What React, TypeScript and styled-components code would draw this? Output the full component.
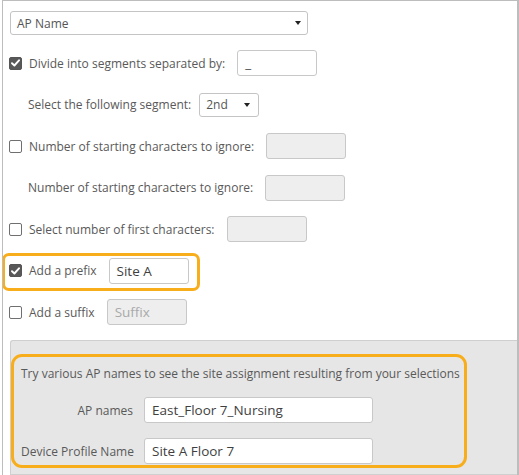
import React from "react";
import styled, { createGlobalStyle } from "styled-components";

const GlobalStyle = createGlobalStyle`
  html, body {
    margin: 0;
    padding: 0;
    background: #ffffff;
  }
  body {
    font-family: "Open Sans", "Noto Sans", "Liberation Sans", sans-serif;
    color: #595959;
  }
`;

const ORANGE = "#f8ad1a";

const Frame = styled.div`
  position: relative;
  box-sizing: border-box;
  width: 517px;
  height: 475px;
  margin-left: 2px;
  padding: 10px 0 0 7px;
  border: 1px solid #bdbdbd;
  border-right-width: 2px;
  border-bottom: none;
  overflow: hidden;
`;

const SelectBox = styled.div<{ $width: number; $caretGap: number }>`
  box-sizing: border-box;
  display: flex;
  align-items: center;
  justify-content: space-between;
  width: ${({ $width }) => $width}px;
  height: 24px;
  padding: 0 ${({ $caretGap }) => $caretGap}px 0 6px;
  border: 1px solid #c4c4c4;
  border-radius: 3px;
  background: #ffffff;
  font-size: 12px;
  color: #555555;
`;

const Caret = styled.span`
  width: 0;
  height: 0;
  border-left: 3.5px solid transparent;
  border-right: 3.5px solid transparent;
  border-top: 4.5px solid #222222;
`;

const Form = styled.div`
  display: flex;
  flex-direction: column;
  gap: 15.5px;
  margin-top: 15px;
`;

const Row = styled.div<{ $indent?: boolean; $highlight?: boolean; $gap?: number }>`
  position: relative;
  display: flex;
  align-items: center;
  align-self: flex-start;
  height: 26px;
  gap: ${({ $gap }) => $gap ?? 12}px;
  padding-left: ${({ $indent }) => ($indent ? "18px" : "0")};

  &::after {
    content: "";
    display: ${({ $highlight }) => ($highlight ? "block" : "none")};
    position: absolute;
    top: -5px;
    left: -8px;
    right: -11px;
    bottom: -7px;
    border: 3px solid ${ORANGE};
    border-radius: 7px;
    pointer-events: none;
  }
`;

const Check = styled.label`
  display: flex;
  align-items: center;
  gap: 7px;
  font-size: 12px;
  color: #595959;
  margin-left: -1px;
`;

const Box = styled.span<{ $checked?: boolean }>`
  box-sizing: border-box;
  display: flex;
  align-items: center;
  justify-content: center;
  width: 13px;
  height: 13px;
  border-radius: 2px;
  border: 1px solid ${({ $checked }) => ($checked ? "#555555" : "#6f6f6f")};
  background: ${({ $checked }) => ($checked ? "#585858" : "#ffffff")};
`;

const Label = styled.span`
  font-size: 12px;
  color: #595959;
`;

const Field = styled.div<{ $disabled?: boolean; $width?: number }>`
  box-sizing: border-box;
  display: flex;
  align-items: center;
  width: ${({ $width }) => $width ?? 80}px;
  height: 26px;
  padding: 0 7px;
  border: 1px solid #c8c8c8;
  border-radius: 3px;
  background: ${({ $disabled }) => ($disabled ? "#eeeeee" : "#ffffff")};
  font-size: 13.5px;
  color: ${({ $disabled }) => ($disabled ? "#a9a9a9" : "#3f3f3f")};
`;

const Panel = styled.div`
  box-sizing: border-box;
  margin-top: 15px;
  height: 135px;
  padding: 13px 0 0 0;
  background: #e6e6e6;
  border: 1px solid #cfcfcf;
  border-right: none;
  border-top-left-radius: 3px;
`;

const Tester = styled.div`
  box-sizing: border-box;
  width: 456px;
  padding: 8px 7px 1px 7px;
  border: 3px solid ${ORANGE};
  border-radius: 11px;
`;

const Intro = styled.div`
  font-size: 12px;
  line-height: 18px;
  color: #595959;
  white-space: nowrap;
`;

const Grid = styled.div`
  display: grid;
  grid-template-columns: 112px 229px;
  column-gap: 11px;
  row-gap: 15px;
  align-items: center;
  margin-top: 14px;
`;

const GridLabel = styled.span`
  text-align: right;
  font-size: 12px;
  color: #595959;
  white-space: nowrap;
`;

const Tick = () => (
  <svg width="9" height="8" viewBox="0 0 9 8">
    <path
      d="M1 4.2 L3.4 6.5 L8 1.3"
      fill="none"
      stroke="#ffffff"
      strokeWidth="1.9"
      strokeLinecap="round"
      strokeLinejoin="round"
    />
  </svg>
);

const CheckItem = ({ checked, label }: { checked?: boolean; label: string }) => (
  <Check>
    <Box $checked={checked}>{checked ? <Tick /> : null}</Box>
    {label}
  </Check>
);

export default function App() {
  return (
    <>
      <GlobalStyle />
      <Frame>
        <SelectBox $width={298} $caretGap={6}>
          AP Name
          <Caret />
        </SelectBox>

        <Form>
          <Row>
            <CheckItem checked label="Divide into segments separated by:" />
            <Field>_</Field>
          </Row>
          <Row $indent $gap={8}>
            <Label>Select the following segment:</Label>
            <SelectBox $width={60} $caretGap={8}>
              2nd
              <Caret />
            </SelectBox>
          </Row>
          <Row>
            <CheckItem label="Number of starting characters to ignore:" />
            <Field $disabled />
          </Row>
          <Row $indent>
            <Label>Number of starting characters to ignore:</Label>
            <Field $disabled />
          </Row>
          <Row>
            <CheckItem label="Select number of first characters:" />
            <Field $disabled />
          </Row>
          <Row $highlight>
            <CheckItem checked label="Add a prefix" />
            <Field>Site A</Field>
          </Row>
          <Row>
            <CheckItem label="Add a suffix" />
            <Field $disabled>Suffix</Field>
          </Row>
        </Form>

        <Panel>
          <Tester>
            <Intro>
              Try various AP names to see the site assignment resulting from your selections
            </Intro>
            <Grid>
              <GridLabel>AP names</GridLabel>
              <Field $width={229}>East_Floor 7_Nursing</Field>
              <GridLabel>Device Profile Name</GridLabel>
              <Field $width={229}>Site A Floor 7</Field>
            </Grid>
          </Tester>
        </Panel>
      </Frame>
    </>
  );
}
